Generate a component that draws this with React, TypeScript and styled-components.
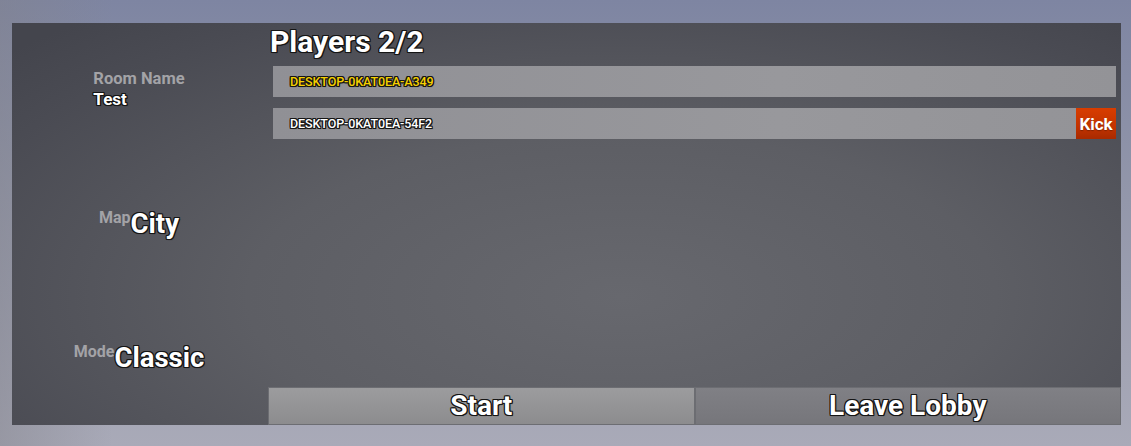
import React from "react";
import styled, { createGlobalStyle } from "styled-components";

const Global = createGlobalStyle`
  html, body { margin: 0; padding: 0; }
  body {
    width: 1131px;
    height: 446px;
    overflow: hidden;
    font-family: Roboto, "Liberation Sans", sans-serif;
    background: linear-gradient(180deg, #7e85a2 0%, #9397aa 45%, #a9aab8 100%);
  }
`;

const outline = (c: string) =>
  `-1px -1px 0 ${c}, 1px -1px 0 ${c}, -1px 1px 0 ${c}, 1px 1px 0 ${c}, 0 -1px 0 ${c}, 0 1px 0 ${c}, -1px 0 0 ${c}, 1px 0 0 ${c}, 1px 1px 1px rgba(0,0,0,0.6)`;

const Stage = styled.div`
  width: 1131px;
  height: 446px;
  padding: 23px 10px 21px 12px;
  box-sizing: border-box;
  background: linear-gradient(90deg, rgba(130,130,138,0.45) 0%, rgba(130,130,138,0) 10%);
`;

const Panel = styled.div`
  display: flex;
  width: 1109px;
  height: 402px;
  background: radial-gradient(ellipse 75% 90% at 55% 68%, #67686e 0%, #5d5e64 45%, #4a4b53 85%, #44454d 100%);
`;

const Side = styled.div`
  width: 256px;
  display: grid;
  grid-template-rows: 1fr 1fr 1fr;
`;

const Slot = styled.div`
  display: flex;
  align-items: center;
  justify-content: center;
  padding-right: 2px;
`;

const Stack = styled.div`
  display: flex;
  flex-direction: column;
  align-items: flex-start;
  gap: 1px;
  padding-bottom: 2px;
`;

const Inline = styled.div`
  display: flex;
  align-items: flex-start;
`;

const Label = styled.span<{ $size: number }>`
  color: #a3a3a7;
  font-weight: 700;
  font-size: ${(p) => p.$size}px;
  line-height: 1.15;
`;

const Value = styled.span<{ $size: number }>`
  color: #ffffff;
  font-weight: 700;
  font-size: ${(p) => p.$size}px;
  line-height: 1.1;
  text-shadow: ${outline("#151515")};
`;

const Main = styled.div`
  flex: 1;
  display: flex;
  flex-direction: column;
`;

const Title = styled.h1`
  margin: 0;
  padding: 1px 0 0 2px;
  height: 41px;
  box-sizing: border-box;
  color: #fff;
  font-size: 30px;
  font-weight: 700;
  line-height: 36px;
  text-shadow: ${outline("#151515")};
`;

const List = styled.div`
  display: flex;
  flex-direction: column;
  gap: 11px;
  padding: 2px 5px 0 5px;
  flex: 1;
`;

const Row = styled.div`
  height: 31px;
  display: flex;
  align-items: center;
  background: linear-gradient(90deg, #909095 0%, #98989c 60%, #939397 100%);
`;

const Name = styled.span<{ $host?: boolean }>`
  flex: 1;
  padding-left: 17px;
  font-size: 12.5px;
  font-weight: 500;
  letter-spacing: -0.1px;
  color: ${(p) => (p.$host ? "#f5d000" : "#ffffff")};
  text-shadow: ${outline("#151515")};
`;

const Kick = styled.button`
  height: 31px;
  width: 40px;
  border: none;
  padding: 0;
  background: linear-gradient(180deg, #d83d00 0%, #c23300 60%, #a82a00 100%);
  color: #fff;
  font-family: Roboto, "Liberation Sans", sans-serif;
  font-size: 17px;
  font-weight: 700;
  text-shadow: 0 1px 1px rgba(0,0,0,0.3);
`;

const Actions = styled.div`
  display: grid;
  grid-template-columns: 1fr 1fr;
  height: 38px;
`;

const Action = styled.button<{ $dark?: boolean }>`
  border: 1px solid #6c6d72;
  background: ${(p) =>
    p.$dark
      ? "linear-gradient(180deg, #808085 0%, #76767b 100%)"
      : "linear-gradient(180deg, #9c9c9e 0%, #8c8c8e 100%)"};
  color: #fff;
  font-family: Roboto, "Liberation Sans", sans-serif;
  font-size: 28px;
  font-weight: 700;
  padding: 0;
  line-height: 36px;
  text-shadow: ${outline("#151515")};
`;

export default function App() {
  return (
    <>
      <Global />
      <Stage>
        <Panel>
          <Side>
            <Slot>
              <Stack>
                <Label $size={16.5}>Room Name</Label>
                <Value $size={17}>Test</Value>
              </Stack>
            </Slot>
            <Slot>
              <Inline>
                <Label $size={16}>Map</Label>
                <Value $size={27.5}>City</Value>
              </Inline>
            </Slot>
            <Slot>
              <Inline>
                <Label $size={16}>Mode</Label>
                <Value $size={27.5}>Classic</Value>
              </Inline>
            </Slot>
          </Side>
          <Main>
            <Title>Players 2/2</Title>
            <List>
              <Row>
                <Name $host>DESKTOP-0KAT0EA-A349</Name>
              </Row>
              <Row>
                <Name>DESKTOP-0KAT0EA-54F2</Name>
                <Kick>Kick</Kick>
              </Row>
            </List>
            <Actions>
              <Action>Start</Action>
              <Action $dark>Leave Lobby</Action>
            </Actions>
          </Main>
        </Panel>
      </Stage>
    </>
  );
}
